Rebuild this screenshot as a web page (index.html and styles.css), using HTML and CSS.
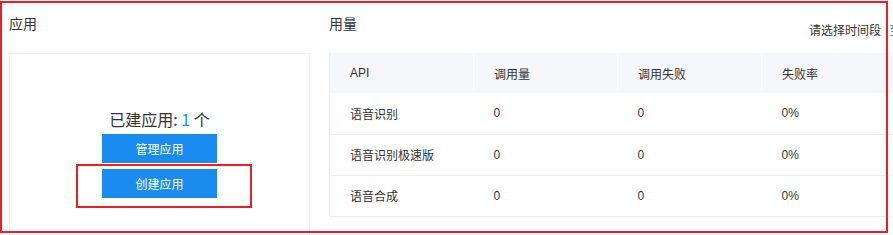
FILE: index.html
```html
<!DOCTYPE html>
<html lang="zh-CN">
<head>
<meta charset="utf-8">
<title>应用与用量</title>
<link rel="stylesheet" href="styles.css">
</head>
<body>
<div class="page">
  <section class="apps">
    <h2 class="title">应用</h2>
    <div class="card">
      <p class="count">已建应用: <span class="num">1</span> 个</p>
      <button class="btn">管理应用</button>
      <button class="btn">创建应用</button>
    </div>
  </section>
  <section class="usage">
    <div class="usage-head">
      <h2 class="title">用量</h2>
      <div class="picker">请选择时间段<span class="sep">至</span></div>
    </div>
    <table class="grid">
      <thead>
        <tr><th>API</th><th>调用量</th><th>调用失败</th><th>失败率</th></tr>
      </thead>
      <tbody>
        <tr><td>语音识别</td><td>0</td><td>0</td><td>0%</td></tr>
        <tr><td>语音识别极速版</td><td>0</td><td>0</td><td>0%</td></tr>
        <tr><td>语音合成</td><td>0</td><td>0</td><td>0%</td></tr>
      </tbody>
    </table>
  </section>
  <div class="mark mark-outer"></div>
  <div class="mark mark-btn"></div>
</div>
</body>
</html>
```
FILE: styles.css
```css
html, body {
  margin: 0;
  padding: 0;
  background: #fff;
}
body {
  width: 893px;
  height: 235px;
  overflow: hidden;
  font-family: "Liberation Sans", "Noto Sans CJK SC", sans-serif;
  color: #333;
}
.page {
  position: relative;
  display: flex;
  gap: 19px;
  padding-left: 9px;
  width: 1000px;
}
.title {
  margin: 0;
  font-size: 14px;
  font-weight: normal;
  line-height: 20px;
  color: #333;
  font-family: "Noto Sans CJK SC", sans-serif;
}
.apps {
  width: 301px;
  flex: none;
  padding-top: 13px;
}
.apps .title {
  margin-bottom: 20px;
}
.card {
  box-sizing: border-box;
  height: 210px;
  border: 1px solid #f0f1f3;
  display: flex;
  flex-direction: column;
  align-items: center;
  padding-top: 55px;
}
.count {
  margin: 0 0 5px;
  font-size: 16px;
  line-height: 20px;
  font-family: "Noto Sans CJK SC", sans-serif;
  color: #333;
}
.num {
  color: #1890ff;
}
.btn {
  width: 115px;
  height: 29px;
  border: none;
  background: #1a8cf0;
  color: #fff;
  font-size: 12px;
  font-family: "Noto Sans CJK SC", sans-serif;
  padding: 0;
  margin-bottom: 6px;
}
.usage {
  flex: none;
  width: 577px;
  padding-top: 13px;
}
.usage-head {
  display: flex;
  justify-content: space-between;
  height: 40px;
}
.picker {
  font-size: 12px;
  line-height: 20px;
  padding-top: 7px;
  padding-right: 5px;
  font-family: "Noto Sans CJK SC", sans-serif;
  color: #333;
}
.sep {
  color: #1890ff;
  margin-left: 8px;
}
.grid {
  border-collapse: collapse;
  table-layout: fixed;
  width: 577px;
  border-left: 1px solid #ebeef2;
  font-size: 12px;
  font-family: "Liberation Sans", "Noto Sans CJK SC", sans-serif;
}
.grid th, .grid td {
  box-sizing: border-box;
  width: 144px;
  text-align: left;
  padding: 0 0 0 20px;
  font-weight: normal;
  color: #333;
}
.grid th {
  height: 40px;
  background: #f5f7fa;
  border-right: 1px solid #fbfcfd;
}
.grid td {
  height: 41px;
  border-bottom: 1px solid #ebeef2;
}
.mark {
  position: absolute;
  border: 2px solid #ee1c25;
  box-sizing: border-box;
  pointer-events: none;
}
.mark-outer {
  left: 0;
  top: 1px;
  width: 888px;
  height: 232px;
}
.mark-btn {
  left: 76px;
  top: 164px;
  width: 176px;
  height: 44px;
}
```
